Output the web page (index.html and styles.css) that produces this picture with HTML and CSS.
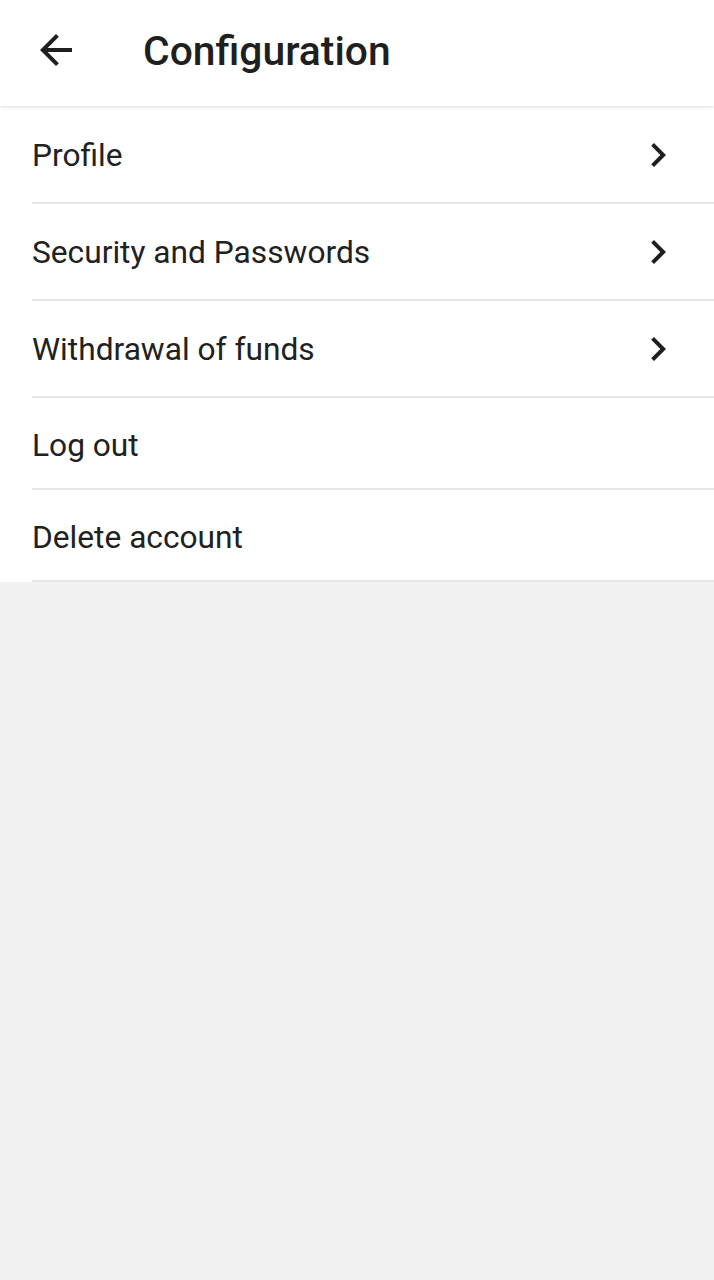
FILE: index.html
```html
<!DOCTYPE html>
<html lang="en">
<head>
<meta charset="utf-8">
<title>Configuration</title>
<link rel="stylesheet" href="styles.css">
</head>
<body>
<header class="appbar">
  <button class="back" aria-label="Back">
    <svg viewBox="0 0 24 24" width="48" height="48"><path d="M20 11H7.83l5.59-5.59L12 4l-8 8 8 8 1.41-1.41L7.83 13H20v-2z" fill="#1f1f1f"/></svg>
  </button>
  <h1 class="title">Configuration</h1>
</header>
<main class="list">
  <div class="row nav"><span class="label">Profile</span><svg class="chev" viewBox="0 0 24 24" width="48" height="48"><path d="M10 6L8.59 7.41 13.17 12l-4.58 4.59L10 18l6-6z" fill="#1f1f1f"/></svg></div>
  <div class="row nav"><span class="label">Security and Passwords</span><svg class="chev" viewBox="0 0 24 24" width="48" height="48"><path d="M10 6L8.59 7.41 13.17 12l-4.58 4.59L10 18l6-6z" fill="#1f1f1f"/></svg></div>
  <div class="row nav"><span class="label">Withdrawal of funds</span><svg class="chev" viewBox="0 0 24 24" width="48" height="48"><path d="M10 6L8.59 7.41 13.17 12l-4.58 4.59L10 18l6-6z" fill="#1f1f1f"/></svg></div>
  <div class="row plain"><span class="label">Log out</span></div>
  <div class="row plain"><span class="label">Delete account</span></div>
</main>
</body>
</html>
```
FILE: styles.css
```css
html, body {
  margin: 0;
  padding: 0;
  background: #f1f1f1;
  font-family: Roboto, "Noto Sans", sans-serif;
  color: #212121;
}
.appbar {
  height: 106px;
  background: #fff;
  display: flex;
  align-items: center;
  box-shadow: 0 1px 3px rgba(0,0,0,0.14);
  position: relative;
  z-index: 1;
}
.back {
  border: 0;
  background: none;
  padding: 0;
  margin: -6px 0 0 32px;
  width: 48px;
  height: 48px;
  display: flex;
}
.title {
  margin: -4px 0 0 63px;
  font-size: 40.8px;
  font-weight: 500;
  color: #1f1f1f;
}
.list {
  background: #fff;
  padding-top: 1px;
}
.row {
  margin-left: 32px;
  height: 90px;
  border-bottom: 2px solid #e6e6e6;
  display: flex;
  align-items: center;
  justify-content: space-between;
}
.row.nav {
  height: 95px;
}
.label {
  font-size: 31.7px;
  line-height: 1;
  margin-top: 2px;
}
.row.plain .label {
  margin-top: 5px;
}
.chev {
  margin-right: 32px;
}
```
